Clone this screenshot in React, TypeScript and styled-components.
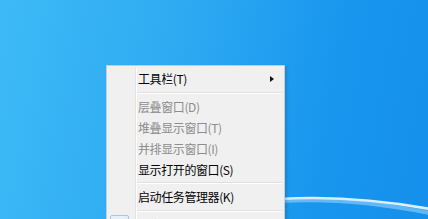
import React from 'react'
import styled, { createGlobalStyle } from 'styled-components'

const Global = createGlobalStyle`
  html, body { margin: 0; padding: 0; }
  body {
    width: 428px;
    height: 219px;
    overflow: hidden;
    font-family: "Noto Sans CJK SC", "Noto Sans", sans-serif;
  }
`

const Desktop = styled.div`
  position: relative;
  width: 428px;
  height: 219px;
  overflow: hidden;
  box-sizing: border-box;
  padding: 65px 0 0 106px;
  background: linear-gradient(100deg, #3dbaf6 0%, #2eaaf2 40%, #1896ee 75%, #1590ec 100%);
`

const Wave = styled.svg`
  position: absolute;
  left: 0;
  top: 0;
  pointer-events: none;
`

const Menu = styled.div`
  position: relative;
  width: 179px;
  box-sizing: border-box;
  padding: 2px;
  background: #f0f0f0;
  border: 1px solid #c9cdd2;
  box-shadow: 2px 2px 3px rgba(0, 40, 90, 0.2);
  &::before {
    content: '';
    position: absolute;
    left: 28px;
    top: 2px;
    bottom: 0;
    width: 1px;
    background: #e2e3e3;
    border-right: 1px solid #ffffff;
  }
`

const Row = styled.div<{ $disabled?: boolean }>`
  position: relative;
  display: flex;
  align-items: center;
  height: 21px;
  padding-left: 29px;
  font-size: 12px;
  letter-spacing: -0.4px;
  color: ${p => (p.$disabled ? '#8c8c8c' : '#050505')};
`

const Label = styled.span`
  flex: 1;
  white-space: nowrap;
`

const Arrow = styled.span`
  width: 0;
  height: 0;
  margin-right: 8px;
  border-top: 3.5px solid transparent;
  border-bottom: 3.5px solid transparent;
  border-left: 4px solid #111;
`

const Separator = styled.div<{ $h?: number }>`
  display: flex;
  align-items: center;
  height: ${p => p.$h ?? 6}px;
  padding-left: 28px;
  &::after {
    content: '';
    flex: 1;
    height: 1px;
    background: #e0e0e0;
    border-bottom: 1px solid #ffffff;
  }
`

const CheckBox = styled.span`
  position: absolute;
  left: 1px;
  top: 1px;
  width: 19px;
  height: 19px;
  box-sizing: border-box;
  border: 1px solid #a8c6e4;
  background: #e6eef7;
  border-radius: 2px;
`

export default function App() {
  return (
    <>
      <Global />
      <Desktop>
        <Wave width="428" height="219" viewBox="0 0 428 219">
          <path d="M280 199 C 330 196, 380 200, 430 209" stroke="#ffffff" strokeOpacity="0.85" strokeWidth="2.5" fill="none" />
          <path d="M280 201 C 330 198, 380 203, 430 213" stroke="#bfe6ff" strokeOpacity="0.45" strokeWidth="4" fill="none" />
        </Wave>
        <Menu>
          <Row>
            <Label>工具栏(T)</Label>
            <Arrow />
          </Row>
          <Separator $h={7} />
          <Row $disabled>
            <Label>层叠窗口(D)</Label>
          </Row>
          <Row $disabled>
            <Label>堆叠显示窗口(T)</Label>
          </Row>
          <Row $disabled>
            <Label>并排显示窗口(I)</Label>
          </Row>
          <Row>
            <Label>显示打开的窗口(S)</Label>
          </Row>
          <Separator $h={6} />
          <Row>
            <Label>启动任务管理器(K)</Label>
          </Row>
          <Separator $h={7} />
          <Row $disabled>
            <CheckBox />
            <Label>锁定任务栏(L)</Label>
          </Row>
        </Menu>
      </Desktop>
    </>
  )
}
